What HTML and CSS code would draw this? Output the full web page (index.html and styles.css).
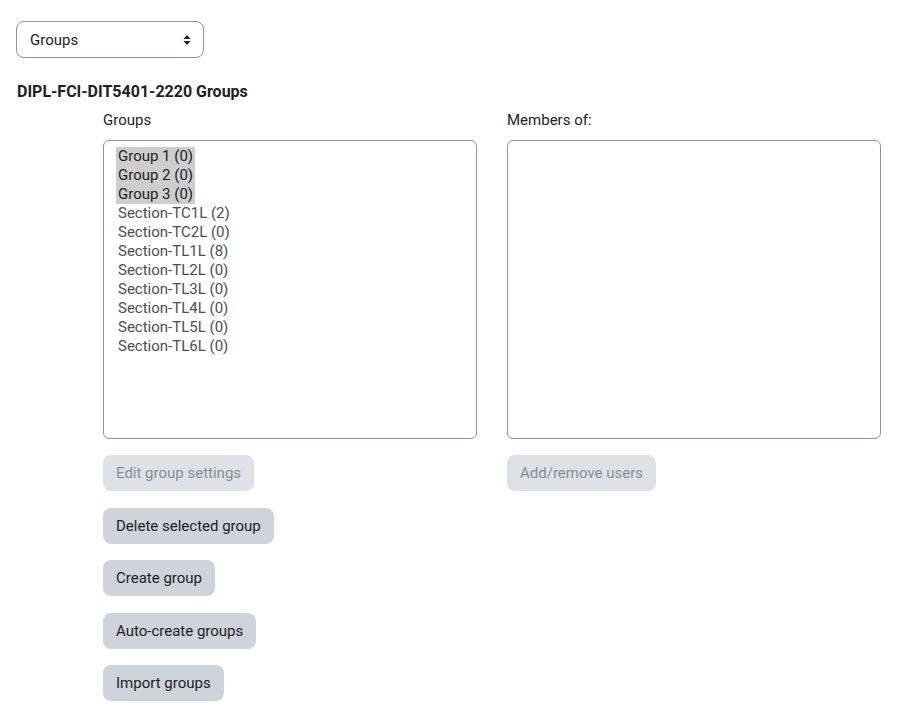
FILE: index.html
```html
<!DOCTYPE html>
<html>
<head>
    <title>Groups</title>
    <link rel="stylesheet" href="styles.css">
</head>
<body>
    <div class="picker">
        <span>Groups</span>
        <svg class="caret" width="8" height="12" viewBox="0 0 8 12"><path d="M4 1 L7.5 5 H0.5 Z M4 11 L0.5 7 H7.5 Z" fill="#1d2125"/></svg>
    </div>

    <h2 class="course">DIPL-FCI-DIT5401-2220 Groups</h2>

    <div class="columns">
        <div class="col">
            <div class="label">Groups</div>
            <div class="listbox">
                <div class="opt selected">Group 1 (0)</div>
                <div class="opt selected">Group 2 (0)</div>
                <div class="opt selected">Group 3 (0)</div>
                <div class="opt">Section-TC1L (2)</div>
                <div class="opt">Section-TC2L (0)</div>
                <div class="opt">Section-TL1L (8)</div>
                <div class="opt">Section-TL2L (0)</div>
                <div class="opt">Section-TL3L (0)</div>
                <div class="opt">Section-TL4L (0)</div>
                <div class="opt">Section-TL5L (0)</div>
                <div class="opt">Section-TL6L (0)</div>
            </div>
            <div class="buttons">
                <button class="btn" disabled>Edit group settings</button>
                <button class="btn">Delete selected group</button>
                <button class="btn">Create group</button>
                <button class="btn">Auto-create groups</button>
                <button class="btn">Import groups</button>
            </div>
        </div>
        <div class="col">
            <div class="label">Members of:</div>
            <div class="listbox"></div>
            <div class="buttons">
                <button class="btn" disabled>Add/remove users</button>
            </div>
        </div>
    </div>
</body>
</html>
```

FILE: styles.css
```css
body {
    margin: 0;
    padding: 21px 16px 0 16px;
    font-family: Roboto, "Liberation Sans", sans-serif;
    font-size: 15px;
    color: #1d2125;
    background: white;
}

.picker {
    height: 35px;
    width: 161px;
    border: 1px solid #8f959e;
    border-radius: 8px;
    display: flex;
    align-items: center;
    justify-content: space-between;
    padding: 0 12px 0 13px;
}

.caret {
    display: block;
}

.course {
    font-size: 16px;
    font-weight: bold;
    margin: 23px 0 0 1px;
    line-height: 22px;
}

.columns {
    display: flex;
    gap: 30px;
    margin-left: 87px;
    margin-top: 6px;
}

.col {
    width: 374px;
}

.label {
    line-height: 22px;
    margin-bottom: 9px;
}

.listbox {
    height: 284px;
    border: 1px solid #8f959e;
    border-radius: 6px;
    padding: 6px 12px 7px 12px;
    color: #495057;
    font-size: 15px;
}

.opt {
    line-height: 19px;
    padding: 0 2px;
    width: fit-content;
}

.opt.selected {
    background: #cecece;
    color: #1d2125;
}

.buttons {
    display: flex;
    flex-direction: column;
    align-items: flex-start;
    gap: 16.5px;
    margin-top: 16px;
}

.btn {
    font-family: inherit;
    font-size: 15px;
    color: #1d2125;
    background: #ced4da;
    border: none;
    border-radius: 8px;
    height: 36px;
    padding: 0 13px;
}

.btn:disabled {
    background: #dee2e6;
    color: #868e96;
}
```
